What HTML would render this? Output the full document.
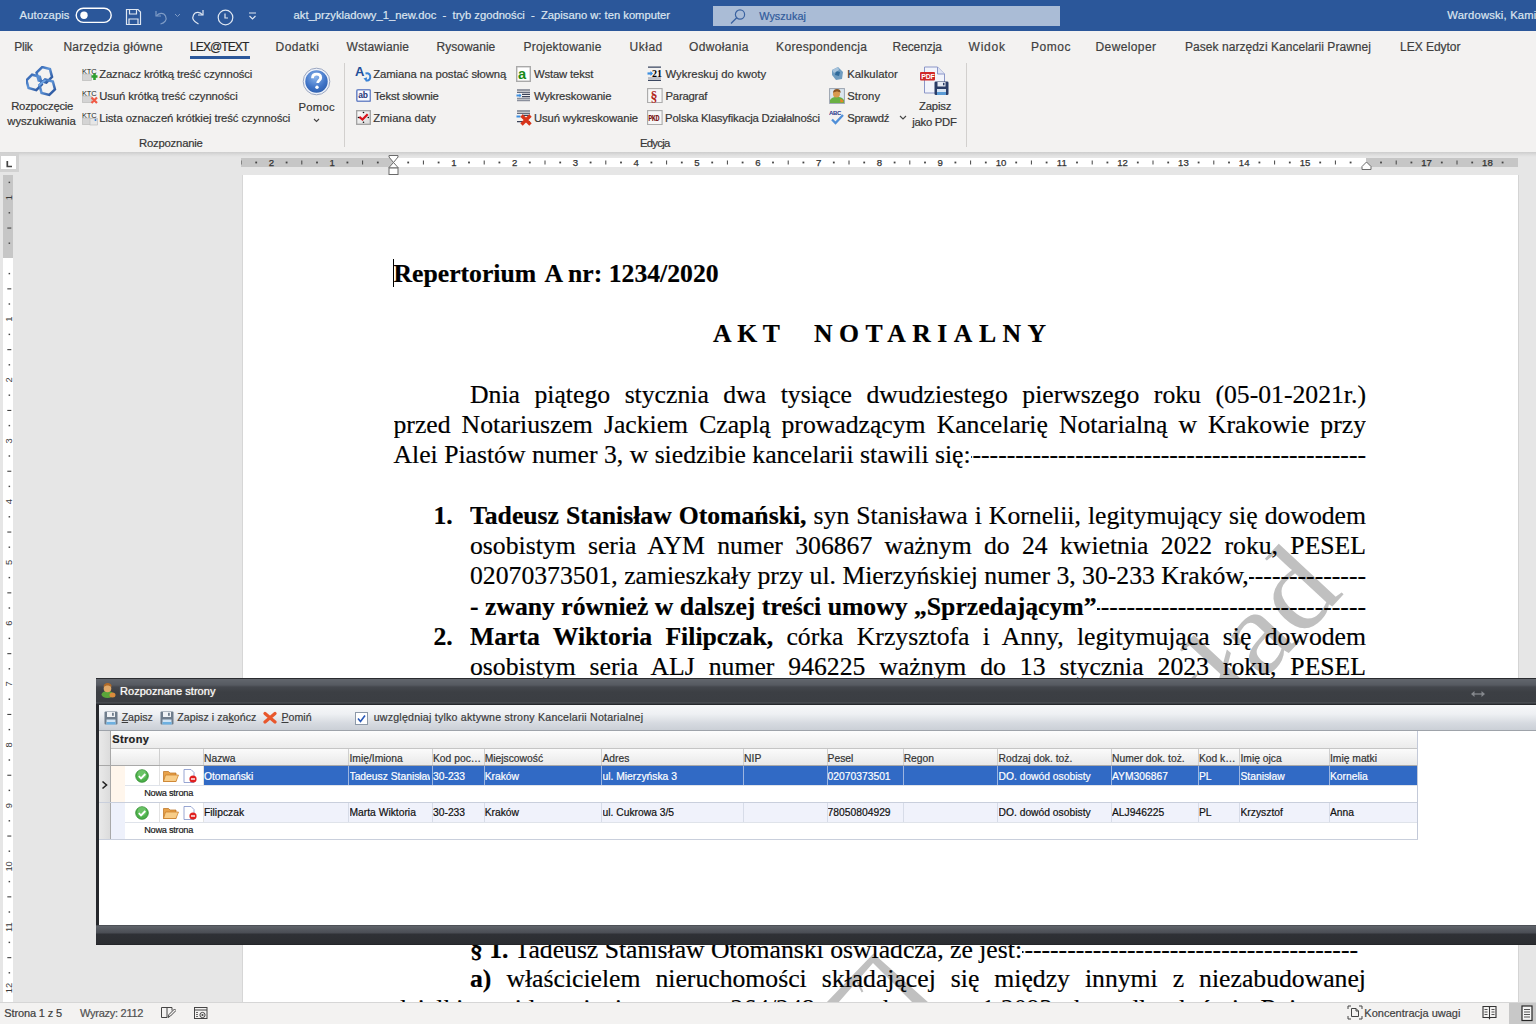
<!DOCTYPE html>
<html><head><meta charset="utf-8"><title>Word</title>
<style>
*{margin:0;padding:0;box-sizing:border-box}
html,body{width:1536px;height:1024px;overflow:hidden}
body{position:relative;background:#e6e6e6;font-family:"Liberation Sans",sans-serif;color:#333}
.a{position:absolute;white-space:nowrap}
#title{position:absolute;left:0;top:0;width:1536px;height:31px;background:#2b579a;color:#e3e9f2;font-size:11.2px}
#tabs{position:absolute;left:0;top:31px;width:1536px;height:121px;background:#f3f2f1}
.tab{position:absolute;top:40px;font-size:12.3px;color:#3c3c3c;line-height:14px}
.rb{position:absolute}
.a{-webkit-text-stroke:0.2px currentColor}
.ic{position:absolute}
#canvas{position:absolute;left:0;top:152px;width:1536px;height:850px;background:#e6e6e6}
#page{position:absolute;left:243px;top:175px;width:1275px;height:827px;background:#fff}
.dl{position:absolute;font-family:"Liberation Serif",serif;font-size:25.7px;line-height:30px;color:#000;white-space:nowrap}
.j{text-align:justify;text-align-last:justify;white-space:normal;height:30px;overflow:hidden}
#status{position:absolute;left:0;top:1002px;width:1536px;height:22px;background:#f3f2f1;border-top:1px solid #d4d4d4;font-size:10.6px;color:#444}
</style></head><body>

<div class="a" style="left:0px;top:0px;width:1536px;height:32px;background:linear-gradient(#2b579a 31px,#8fa4c5 31px)"></div>
<div class="a " style="left:19.61px;top:9.10px;font:11.2px/13.44px 'Liberation Sans',sans-serif;color:#dde5f0;letter-spacing:0.075px;">Autozapis</div>
<svg class="a" style="left:75px;top:7px;" width="38" height="17" viewBox="0 0 38 17"><rect x="1.2" y="1.2" width="35" height="14.2" rx="7.1" fill="none" stroke="#fff" stroke-width="1.4"/><circle cx="9" cy="8.3" r="3.7" fill="#fff"/></svg>
<svg class="a" style="left:125px;top:8px;" width="17" height="18" viewBox="0 0 17 18"><path d="M1.5 1.5h11.5l2.5 2.5v12.5h-14z" fill="none" stroke="#dfe7f2" stroke-width="1.2"/><path d="M4.5 1.5v4.5h7v-4.5M4 16.5v-5.5h9v5.5" fill="none" stroke="#dfe7f2" stroke-width="1.2"/></svg>
<svg class="a" style="left:152px;top:9px;" width="30" height="16" viewBox="0 0 30 16"><path d="M4 2v5h5" fill="none" stroke="#7f9cc6" stroke-width="1.2"/><path d="M4.5 7c2-3 7-4 9 0s-1 7-5 8" fill="none" stroke="#7f9cc6" stroke-width="1.2"/><path d="M23 5l2.5 2.5 2.5-2.5" fill="none" stroke="#7f9cc6" stroke-width="1"/></svg>
<svg class="a" style="left:189px;top:8px;" width="18" height="18" viewBox="0 0 18 18"><path d="M14 2v5h-5" fill="none" stroke="#dfe7f2" stroke-width="1.2"/><path d="M13.5 7c-2-3-7-4-9 0s1 7 5 9" fill="none" stroke="#dfe7f2" stroke-width="1.2"/></svg>
<svg class="a" style="left:217px;top:9px;" width="17" height="17" viewBox="0 0 17 17"><circle cx="8.5" cy="8.5" r="7.3" fill="none" stroke="#dfe7f2" stroke-width="1.2"/><path d="M8 4.5v4.5h3" fill="none" stroke="#dfe7f2" stroke-width="1.2"/></svg>
<svg class="a" style="left:247px;top:11px;" width="11" height="10" viewBox="0 0 11 10"><path d="M2 2h7M2.5 5l3 3 3-3" fill="none" stroke="#dfe7f2" stroke-width="1.1"/></svg>
<div class="a " style="left:293.61px;top:9.00px;font:11.2px/13.44px 'Liberation Sans',sans-serif;color:#dde5f0;letter-spacing:0.011px;">akt_przykladowy_1_new.doc&nbsp;&nbsp;-&nbsp;&nbsp;tryb zgodności&nbsp;&nbsp;-&nbsp;&nbsp;Zapisano w: ten komputer</div>
<div class="a" style="left:713px;top:6px;width:347px;height:20px;background:#aabcd6"></div>
<svg class="a" style="left:729px;top:8px;" width="18" height="17" viewBox="0 0 18 17"><circle cx="11" cy="6.5" r="4.6" fill="none" stroke="#3a62a0" stroke-width="1.2"/><path d="M7.7 9.8L2 15.5" stroke="#3a62a0" stroke-width="1.3"/></svg>
<div class="a " style="left:759.22px;top:9.78px;font:10.8px/12.96px 'Liberation Sans',sans-serif;color:#2f5a9b;letter-spacing:0.078px;">Wyszukaj</div>
<div class="a " style="left:1447.31px;top:9.40px;font:11.2px/13.44px 'Liberation Sans',sans-serif;color:#dde5f0;letter-spacing:0.214px;">Wardowski, Kamil</div>
<div class="a" style="left:0px;top:31px;width:1536px;height:121px;background:#f3f2f1"></div>
<div class="a" style="left:0px;top:152px;width:1536px;height:5px;background:linear-gradient(#cdcdcd,#dedede 60%,#e6e6e6)"></div>
<div class="a " style="left:14.18px;top:40.24px;font:12.0px/14.40px 'Liberation Sans',sans-serif;color:#404040;letter-spacing:-0.232px;">Plik</div>
<div class="a " style="left:63.38px;top:40.24px;font:12.0px/14.40px 'Liberation Sans',sans-serif;color:#404040;letter-spacing:0.257px;">Narzędzia główne</div>
<div class="a " style="left:190.08px;top:40.24px;font:12.0px/14.40px 'Liberation Sans',sans-serif;color:#262626;letter-spacing:-0.913px;">LEX@TEXT</div>
<div class="a " style="left:275.58px;top:40.24px;font:12.0px/14.40px 'Liberation Sans',sans-serif;color:#404040;letter-spacing:0.425px;">Dodatki</div>
<div class="a " style="left:346.58px;top:40.24px;font:12.0px/14.40px 'Liberation Sans',sans-serif;color:#404040;letter-spacing:0.110px;">Wstawianie</div>
<div class="a " style="left:436.58px;top:40.24px;font:12.0px/14.40px 'Liberation Sans',sans-serif;color:#404040;letter-spacing:-0.007px;">Rysowanie</div>
<div class="a " style="left:523.58px;top:40.24px;font:12.0px/14.40px 'Liberation Sans',sans-serif;color:#404040;letter-spacing:0.205px;">Projektowanie</div>
<div class="a " style="left:629.58px;top:40.24px;font:12.0px/14.40px 'Liberation Sans',sans-serif;color:#404040;letter-spacing:0.490px;">Układ</div>
<div class="a " style="left:689.08px;top:40.24px;font:12.0px/14.40px 'Liberation Sans',sans-serif;color:#404040;letter-spacing:0.330px;">Odwołania</div>
<div class="a " style="left:776.08px;top:40.24px;font:12.0px/14.40px 'Liberation Sans',sans-serif;color:#404040;letter-spacing:0.316px;">Korespondencja</div>
<div class="a " style="left:892.58px;top:40.24px;font:12.0px/14.40px 'Liberation Sans',sans-serif;color:#404040;letter-spacing:-0.098px;">Recenzja</div>
<div class="a " style="left:968.58px;top:40.24px;font:12.0px/14.40px 'Liberation Sans',sans-serif;color:#404040;letter-spacing:0.750px;">Widok</div>
<div class="a " style="left:1031.08px;top:40.24px;font:12.0px/14.40px 'Liberation Sans',sans-serif;color:#404040;letter-spacing:0.498px;">Pomoc</div>
<div class="a " style="left:1095.58px;top:40.24px;font:12.0px/14.40px 'Liberation Sans',sans-serif;color:#404040;letter-spacing:0.372px;">Deweloper</div>
<div class="a " style="left:1185.08px;top:40.24px;font:12.0px/14.40px 'Liberation Sans',sans-serif;color:#404040;letter-spacing:0.034px;">Pasek narzędzi Kancelarii Prawnej</div>
<div class="a " style="left:1400.08px;top:40.24px;font:12.0px/14.40px 'Liberation Sans',sans-serif;color:#404040;letter-spacing:-0.040px;">LEX Edytor</div>
<div class="a" style="left:190px;top:56px;width:60px;height:2.5px;background:#2b579a"></div>
<div class="a " style="left:11.20px;top:100.30px;font:11.3px/13.56px 'Liberation Sans',sans-serif;color:#363636;letter-spacing:-0.250px;">Rozpoczęcie</div>
<div class="a " style="left:7.30px;top:115.30px;font:11.3px/13.56px 'Liberation Sans',sans-serif;color:#363636;letter-spacing:-0.063px;">wyszukiwania</div>
<div class="a " style="left:99.20px;top:68.30px;font:11.3px/13.56px 'Liberation Sans',sans-serif;color:#363636;letter-spacing:-0.131px;">Zaznacz krótką treść czynności</div>
<div class="a " style="left:99.20px;top:90.00px;font:11.3px/13.56px 'Liberation Sans',sans-serif;color:#363636;letter-spacing:-0.084px;">Usuń krótką treść czynności</div>
<div class="a " style="left:99.20px;top:111.80px;font:11.3px/13.56px 'Liberation Sans',sans-serif;color:#363636;letter-spacing:-0.092px;">Lista oznaczeń krótkiej treść czynności</div>
<div class="a " style="left:298.40px;top:100.60px;font:11.3px/13.56px 'Liberation Sans',sans-serif;color:#363636;letter-spacing:0.255px;">Pomoc</div>
<div class="a " style="left:139.00px;top:136.70px;font:11.3px/13.56px 'Liberation Sans',sans-serif;color:#363636;letter-spacing:-0.207px;">Rozpoznanie</div>
<div class="a " style="left:373.20px;top:68.30px;font:11.3px/13.56px 'Liberation Sans',sans-serif;color:#363636;letter-spacing:-0.053px;">Zamiana na postać słowną</div>
<div class="a " style="left:373.90px;top:90.00px;font:11.3px/13.56px 'Liberation Sans',sans-serif;color:#363636;letter-spacing:-0.184px;">Tekst słownie</div>
<div class="a " style="left:373.20px;top:111.80px;font:11.3px/13.56px 'Liberation Sans',sans-serif;color:#363636;letter-spacing:0.061px;">Zmiana daty</div>
<div class="a " style="left:533.90px;top:68.30px;font:11.3px/13.56px 'Liberation Sans',sans-serif;color:#363636;letter-spacing:-0.141px;">Wstaw tekst</div>
<div class="a " style="left:533.90px;top:90.00px;font:11.3px/13.56px 'Liberation Sans',sans-serif;color:#363636;letter-spacing:-0.119px;">Wykreskowanie</div>
<div class="a " style="left:533.90px;top:111.80px;font:11.3px/13.56px 'Liberation Sans',sans-serif;color:#363636;letter-spacing:-0.114px;">Usuń wykreskowanie</div>
<div class="a " style="left:665.50px;top:68.30px;font:11.3px/13.56px 'Liberation Sans',sans-serif;color:#363636;letter-spacing:0.050px;">Wykreskuj do kwoty</div>
<div class="a " style="left:665.50px;top:90.00px;font:11.3px/13.56px 'Liberation Sans',sans-serif;color:#363636;letter-spacing:-0.207px;">Paragraf</div>
<div class="a " style="left:665.10px;top:111.80px;font:11.3px/13.56px 'Liberation Sans',sans-serif;color:#363636;letter-spacing:-0.166px;">Polska Klasyfikacja Działalności</div>
<div class="a " style="left:847.20px;top:68.30px;font:11.3px/13.56px 'Liberation Sans',sans-serif;color:#363636;letter-spacing:0.038px;">Kalkulator</div>
<div class="a " style="left:847.20px;top:90.00px;font:11.3px/13.56px 'Liberation Sans',sans-serif;color:#363636;letter-spacing:0.046px;">Strony</div>
<div class="a " style="left:847.20px;top:111.80px;font:11.3px/13.56px 'Liberation Sans',sans-serif;color:#363636;letter-spacing:-0.296px;">Sprawdź</div>
<div class="a " style="left:918.90px;top:100.30px;font:11.3px/13.56px 'Liberation Sans',sans-serif;color:#363636;letter-spacing:-0.158px;">Zapisz</div>
<div class="a " style="left:912.30px;top:115.70px;font:11.3px/13.56px 'Liberation Sans',sans-serif;color:#363636;letter-spacing:-0.268px;">jako PDF</div>
<div class="a " style="left:640.00px;top:136.50px;font:11.3px/13.56px 'Liberation Sans',sans-serif;color:#363636;letter-spacing:-0.745px;">Edycja</div>
<div class="a" style="left:344px;top:63px;width:1px;height:84px;background:#d2d0ce"></div>
<div class="a" style="left:966px;top:63px;width:1px;height:84px;background:#d2d0ce"></div>
<svg class="a" style="left:26px;top:66px;" width="31" height="31" viewBox="0 0 31 31"><defs><linearGradient id="hb" x1="0" y1="0" x2="1" y2="1"><stop offset="0" stop-color="#2a5aa8"/><stop offset=".45" stop-color="#5d93d6"/><stop offset="1" stop-color="#1d4690"/></linearGradient></defs><path d="M26.03,10.87 L20.37,16.53 L12.64,14.46 L10.57,6.73 L16.23,1.07 L23.96,3.14Z" fill="none" stroke="url(#hb)" stroke-width="2.5"/><path d="M15.93,18.47 L10.27,24.13 L2.54,22.06 L0.47,14.33 L6.13,8.67 L13.86,10.74Z" fill="none" stroke="url(#hb)" stroke-width="2.5"/><path d="M28.93,23.27 L23.27,28.93 L15.54,26.86 L13.47,19.13 L19.13,13.47 L26.86,15.54Z" fill="none" stroke="url(#hb)" stroke-width="2.5"/><path d="M12.5 19.5l7-5.5" stroke="#6ea2e0" stroke-width="2"/></svg>
<svg class="a" style="left:82px;top:67px;" width="17" height="15" viewBox="0 0 17 15"><text x="0" y="6.5" font-family="Liberation Sans" font-size="7.5" fill="#222" letter-spacing="-0.2">KTC</text><rect x="0.5" y="7" width="9" height="6.5" fill="#d4d4d4" stroke="#b5b5b5" stroke-width=".6"/><path d="M9.5 9.5h6M12.5 6.5v6.5" stroke="#2ea02e" stroke-width="2.6"/></svg>
<svg class="a" style="left:82px;top:89px;" width="17" height="15" viewBox="0 0 17 15"><text x="0" y="6.5" font-family="Liberation Sans" font-size="7.5" fill="#222" letter-spacing="-0.2">KTC</text><rect x="0.5" y="7" width="9" height="6.5" fill="#d4d4d4" stroke="#b5b5b5" stroke-width=".6"/><path d="M9.5 8.5l5.5 5.5M15 8.5l-5.5 5.5" stroke="#f05a45" stroke-width="2.2"/></svg>
<svg class="a" style="left:82px;top:111px;" width="17" height="15" viewBox="0 0 17 15"><text x="0" y="6.5" font-family="Liberation Sans" font-size="7.5" fill="#222" letter-spacing="-0.2">KTC</text><rect x="0.5" y="7" width="9" height="6.5" fill="#d4d4d4" stroke="#b5b5b5" stroke-width=".6"/><rect x="8" y="7.5" width="7.5" height="6.5" fill="#e6e6e6" stroke="#b5b5b5" stroke-width=".6"/><circle cx="13.5" cy="9" r="1" fill="#3a7ed0"/></svg>
<svg class="a" style="left:302px;top:67px;" width="29" height="29" viewBox="0 0 29 29"><defs><radialGradient id="pg" cx=".45" cy=".3" r=".8"><stop offset="0" stop-color="#8ab4ec"/><stop offset=".6" stop-color="#3f73c6"/><stop offset="1" stop-color="#2a5aa8"/></radialGradient></defs><circle cx="14.5" cy="14.5" r="13.3" fill="#eef2fa" stroke="#9aa6c0" stroke-width="1"/><circle cx="14.5" cy="14.5" r="11.2" fill="url(#pg)"/><path d="M10.5 11.2c0-2.6 1.9-4 4.2-4s4 1.4 4 3.5c0 2.6-3 3-3 5.3" fill="none" stroke="#fff" stroke-width="2.8"/><circle cx="15" cy="20.3" r="1.7" fill="#fff"/></svg>
<svg class="a" style="left:313px;top:118px;" width="7" height="5" viewBox="0 0 7 5"><path d="M1 1l2.5 2.5 2.5-2.5" fill="none" stroke="#444" stroke-width="1.1"/></svg>
<svg class="a" style="left:355px;top:65px;" width="17" height="18" viewBox="0 0 17 18"><text x="0" y="11" font-family="Liberation Sans" font-weight="bold" font-size="13" fill="#1f4e99">A</text><path d="M10.5 8.5c3.5-1 5.2 1.5 4.7 4.2s-2.7 3.2-4.5 2.7" fill="none" stroke="#3a83d6" stroke-width="2"/><path d="M8.5 13.5l3 3 .6-4.2z" fill="#3a83d6"/></svg>
<svg class="a" style="left:356px;top:89px;" width="15" height="13" viewBox="0 0 15 13"><rect x="0.8" y="0.8" width="13.6" height="11.5" rx="1.2" fill="#fafbff" stroke="#7189c8" stroke-width="1.6"/><text x="2.3" y="9.3" font-family="Liberation Sans" font-weight="bold" font-size="8.5" fill="#1f3478" letter-spacing="-0.3">ab</text></svg>
<svg class="a" style="left:356px;top:110px;" width="15" height="15" viewBox="0 0 15 15"><defs><linearGradient id="dg" x1="0" y1="0" x2="1" y2="1"><stop offset="0" stop-color="#fff"/><stop offset="1" stop-color="#d8d8d8"/></linearGradient></defs><rect x="0.7" y="0.7" width="13.6" height="13.6" fill="url(#dg)" stroke="#a0a0a0" stroke-width="1.3"/><path d="M3.3 6.8l3.2 2.8 5.2-5.3" fill="none" stroke="#d8121b" stroke-width="2.2"/><circle cx="7.5" cy="2.5" r=".8" fill="#111"/><circle cx="2.5" cy="7.5" r=".8" fill="#111"/><circle cx="12.3" cy="7.5" r=".8" fill="#111"/><circle cx="7.5" cy="12.2" r=".8" fill="#111"/></svg>
<svg class="a" style="left:516px;top:66px;" width="15" height="16" viewBox="0 0 15 16"><rect x="0.7" y="0.7" width="13.6" height="14.6" fill="#fff" stroke="#a9a9a9" stroke-width="1.4"/><text x="2" y="12.8" font-family="Liberation Sans" font-weight="bold" font-size="14" fill="#188a18" transform="scale(1.05 1)">a</text></svg>
<svg class="a" style="left:516px;top:89px;" width="15" height="13" viewBox="0 0 15 13"><path d="M1 1h13M1 3.2h13M6 5.4h8M6 7.6h8" stroke="#3a4258" stroke-width="1.1"/><path d="M1 9.6h13M1 11.6h13" stroke="#8a8f9c" stroke-width="1.5"/><path d="M0.5 6.5h4" stroke="#3b8ee0" stroke-width="2"/><path d="M3.5 4.5l2 2-2 2z" fill="#3b8ee0"/></svg>
<svg class="a" style="left:516px;top:110px;" width="16" height="16" viewBox="0 0 16 16"><path d="M1 1h13M1 3.2h13M6 5.4h8M1 11.6h13" stroke="#3a4258" stroke-width="1.1"/><path d="M0.5 6.5h4" stroke="#3b8ee0" stroke-width="2"/><path d="M5.5 5.5l9 9M14.5 5.5l-9 9" stroke="#d8341a" stroke-width="3.4"/></svg>
<svg class="a" style="left:647px;top:66px;" width="16" height="16" viewBox="0 0 16 16"><path d="M1 1.2h13M1 14.3h13" stroke="#3a4660" stroke-width="1.2"/><path d="M1 12h13" stroke="#8a8f9c" stroke-width="1"/><text x="5" y="11" font-family="Liberation Serif" font-weight="bold" font-size="10" fill="#000">21</text><path d="M0.5 7.5h4" stroke="#3b8ee0" stroke-width="2.2"/><path d="M3.5 5l2.5 2.5-2.5 2.5z" fill="#3b8ee0"/></svg>
<svg class="a" style="left:647px;top:88px;" width="16" height="15" viewBox="0 0 16 15"><rect x="0.6" y="0.6" width="14.5" height="14" fill="#f7f7f7" stroke="#a9a9a9" stroke-width="1.1"/><text x="3.6" y="12.8" font-family="Liberation Serif" font-weight="bold" font-size="14" fill="#b3281e">§</text></svg>
<svg class="a" style="left:647px;top:110px;" width="16" height="15" viewBox="0 0 16 15"><rect x="0.6" y="0.6" width="14.5" height="14" fill="#f7f7f7" stroke="#a9a9a9" stroke-width="1.1"/><text x="1.6" y="11.3" font-family="Liberation Mono" font-weight="bold" font-size="9.5" fill="#7a1410" transform="scale(0.72 1)" letter-spacing="-0.6">PKD</text></svg>
<svg class="a" style="left:830px;top:66px;" width="14" height="15" viewBox="0 0 14 15"><path d="M2 4l6-3 5 5-1 7-6 1-4-5z" fill="#6f9cc0"/><path d="M6 5l4 1-1 4-4-1z" fill="#2f6a9a"/><path d="M2 4l6-3 1 3-5 3z" fill="#a8c4dc"/></svg>
<svg class="a" style="left:829px;top:88px;" width="16" height="16" viewBox="0 0 16 16"><rect x="0.6" y="0.6" width="14.8" height="14.8" fill="#dbe6ef" stroke="#9aa2ae" stroke-width="1"/><path d="M1 15v-3c1.5-2.5 4-3 7-3s5.5.5 7 3v3z" fill="#6ab043"/><circle cx="7.5" cy="6" r="3.5" fill="#d99a4e"/><path d="M4 5c0-2.5 1.5-4 4-4s4 1.5 3.5 4c-1-1-2.5-1.5-3.5-1.5S5 4 4 5z" fill="#8a5420"/><path d="M11 11c2 0 3 1 3.5 3l-3 .5z" fill="#e8842a"/></svg>
<svg class="a" style="left:829px;top:109px;" width="17" height="16" viewBox="0 0 17 16"><text x="0" y="6" font-family="Liberation Sans" font-weight="bold" font-size="6" fill="#24348a" letter-spacing="-0.3">ABC</text><path d="M3 10.5l3.5 3.5 7.5-8" fill="none" stroke="#4f8fd8" stroke-width="2.3"/></svg>
<svg class="a" style="left:899px;top:115px;" width="8" height="6" viewBox="0 0 8 6"><path d="M1 1l3 3 3-3" fill="none" stroke="#444" stroke-width="1.1"/></svg>
<svg class="a" style="left:919px;top:66px;" width="31" height="30" viewBox="0 0 31 30"><path d="M5.5 1h13l7 7v19h-20z" fill="#f2f4fb" stroke="#8b96c8" stroke-width="1"/><path d="M18.5 1v7h7" fill="#dfe3f3" stroke="#8b96c8" stroke-width="1"/><rect x="1" y="6" width="15" height="8.5" rx="1" fill="#d02828"/><text x="2.3" y="13" font-family="Liberation Sans" font-weight="bold" font-size="7" fill="#fff" letter-spacing="-0.2">PDF</text><rect x="15.5" y="15.5" width="14" height="13.5" rx="1.3" fill="#2a3c66"/><rect x="18.5" y="16" width="8" height="4.5" fill="#e8ecf4"/><rect x="24" y="16.8" width="1.5" height="2.5" fill="#2a3c66"/><rect x="18" y="23" width="9" height="6" fill="#d8e4f2"/><rect x="18" y="26" width="9" height="3" fill="#5b9bd5"/></svg>
<div class="a" style="left:243px;top:175px;width:1275px;height:827px;background:#fff"></div>
<div class="a" style="left:1518px;top:175px;width:1px;height:827px;background:#d4d4d4"></div>
<div class="a" style="left:242px;top:175px;width:1px;height:827px;background:#d6d6d6"></div>
<div class="a" style="left:0px;top:153px;width:19px;height:19px;background:#d2d2d2"></div>
<div class="a" style="left:1px;top:156px;width:15px;height:13px;background:#ffffff"></div>
<svg class="a" style="left:1px;top:156px;" width="15" height="13" viewBox="0 0 15 13"><path d="M6.3 5v5.5h4.7" fill="none" stroke="#444" stroke-width="1.7"/></svg>
<div class="a" style="left:241px;top:158px;width:1277px;height:9px;background:#c6c6c6"></div>
<div class="a" style="left:393px;top:158px;width:973px;height:9px;background:#fff"></div>
<svg class="a" style="left:241px;top:158px;" width="1277" height="9" viewBox="0 0 1277 9"><rect x="-0.5" y="2.5" width="1" height="4" fill="#444"/><rect x="14.3" y="3.6" width="1.8" height="1.8" fill="#444"/><text x="30.4" y="8" text-anchor="middle" font-size="9.6" fill="#333" font-family="Liberation Sans" stroke="#333" stroke-width="0.25">2</text><rect x="44.7" y="3.6" width="1.8" height="1.8" fill="#444"/><rect x="60.3" y="2.5" width="1" height="4" fill="#444"/><rect x="75.1" y="3.6" width="1.8" height="1.8" fill="#444"/><text x="91.2" y="8" text-anchor="middle" font-size="9.6" fill="#333" font-family="Liberation Sans" stroke="#333" stroke-width="0.25">1</text><rect x="105.5" y="3.6" width="1.8" height="1.8" fill="#444"/><rect x="121.1" y="2.5" width="1" height="4" fill="#444"/><rect x="135.9" y="3.6" width="1.8" height="1.8" fill="#444"/><rect x="166.3" y="3.6" width="1.8" height="1.8" fill="#444"/><rect x="181.9" y="2.5" width="1" height="4" fill="#444"/><rect x="196.7" y="3.6" width="1.8" height="1.8" fill="#444"/><text x="212.8" y="8" text-anchor="middle" font-size="9.6" fill="#333" font-family="Liberation Sans" stroke="#333" stroke-width="0.25">1</text><rect x="227.1" y="3.6" width="1.8" height="1.8" fill="#444"/><rect x="242.7" y="2.5" width="1" height="4" fill="#444"/><rect x="257.5" y="3.6" width="1.8" height="1.8" fill="#444"/><text x="273.6" y="8" text-anchor="middle" font-size="9.6" fill="#333" font-family="Liberation Sans" stroke="#333" stroke-width="0.25">2</text><rect x="287.9" y="3.6" width="1.8" height="1.8" fill="#444"/><rect x="303.5" y="2.5" width="1" height="4" fill="#444"/><rect x="318.3" y="3.6" width="1.8" height="1.8" fill="#444"/><text x="334.4" y="8" text-anchor="middle" font-size="9.6" fill="#333" font-family="Liberation Sans" stroke="#333" stroke-width="0.25">3</text><rect x="348.7" y="3.6" width="1.8" height="1.8" fill="#444"/><rect x="364.3" y="2.5" width="1" height="4" fill="#444"/><rect x="379.1" y="3.6" width="1.8" height="1.8" fill="#444"/><text x="395.2" y="8" text-anchor="middle" font-size="9.6" fill="#333" font-family="Liberation Sans" stroke="#333" stroke-width="0.25">4</text><rect x="409.5" y="3.6" width="1.8" height="1.8" fill="#444"/><rect x="425.1" y="2.5" width="1" height="4" fill="#444"/><rect x="439.9" y="3.6" width="1.8" height="1.8" fill="#444"/><text x="456.0" y="8" text-anchor="middle" font-size="9.6" fill="#333" font-family="Liberation Sans" stroke="#333" stroke-width="0.25">5</text><rect x="470.3" y="3.6" width="1.8" height="1.8" fill="#444"/><rect x="485.9" y="2.5" width="1" height="4" fill="#444"/><rect x="500.7" y="3.6" width="1.8" height="1.8" fill="#444"/><text x="516.8" y="8" text-anchor="middle" font-size="9.6" fill="#333" font-family="Liberation Sans" stroke="#333" stroke-width="0.25">6</text><rect x="531.1" y="3.6" width="1.8" height="1.8" fill="#444"/><rect x="546.7" y="2.5" width="1" height="4" fill="#444"/><rect x="561.5" y="3.6" width="1.8" height="1.8" fill="#444"/><text x="577.6" y="8" text-anchor="middle" font-size="9.6" fill="#333" font-family="Liberation Sans" stroke="#333" stroke-width="0.25">7</text><rect x="591.9" y="3.6" width="1.8" height="1.8" fill="#444"/><rect x="607.5" y="2.5" width="1" height="4" fill="#444"/><rect x="622.3" y="3.6" width="1.8" height="1.8" fill="#444"/><text x="638.4" y="8" text-anchor="middle" font-size="9.6" fill="#333" font-family="Liberation Sans" stroke="#333" stroke-width="0.25">8</text><rect x="652.7" y="3.6" width="1.8" height="1.8" fill="#444"/><rect x="668.3" y="2.5" width="1" height="4" fill="#444"/><rect x="683.1" y="3.6" width="1.8" height="1.8" fill="#444"/><text x="699.2" y="8" text-anchor="middle" font-size="9.6" fill="#333" font-family="Liberation Sans" stroke="#333" stroke-width="0.25">9</text><rect x="713.5" y="3.6" width="1.8" height="1.8" fill="#444"/><rect x="729.1" y="2.5" width="1" height="4" fill="#444"/><rect x="743.9" y="3.6" width="1.8" height="1.8" fill="#444"/><text x="760.0" y="8" text-anchor="middle" font-size="9.6" fill="#333" font-family="Liberation Sans" stroke="#333" stroke-width="0.25">10</text><rect x="774.3" y="3.6" width="1.8" height="1.8" fill="#444"/><rect x="789.9" y="2.5" width="1" height="4" fill="#444"/><rect x="804.7" y="3.6" width="1.8" height="1.8" fill="#444"/><text x="820.8" y="8" text-anchor="middle" font-size="9.6" fill="#333" font-family="Liberation Sans" stroke="#333" stroke-width="0.25">11</text><rect x="835.1" y="3.6" width="1.8" height="1.8" fill="#444"/><rect x="850.7" y="2.5" width="1" height="4" fill="#444"/><rect x="865.5" y="3.6" width="1.8" height="1.8" fill="#444"/><text x="881.6" y="8" text-anchor="middle" font-size="9.6" fill="#333" font-family="Liberation Sans" stroke="#333" stroke-width="0.25">12</text><rect x="895.9" y="3.6" width="1.8" height="1.8" fill="#444"/><rect x="911.5" y="2.5" width="1" height="4" fill="#444"/><rect x="926.3" y="3.6" width="1.8" height="1.8" fill="#444"/><text x="942.4" y="8" text-anchor="middle" font-size="9.6" fill="#333" font-family="Liberation Sans" stroke="#333" stroke-width="0.25">13</text><rect x="956.7" y="3.6" width="1.8" height="1.8" fill="#444"/><rect x="972.3" y="2.5" width="1" height="4" fill="#444"/><rect x="987.1" y="3.6" width="1.8" height="1.8" fill="#444"/><text x="1003.2" y="8" text-anchor="middle" font-size="9.6" fill="#333" font-family="Liberation Sans" stroke="#333" stroke-width="0.25">14</text><rect x="1017.5" y="3.6" width="1.8" height="1.8" fill="#444"/><rect x="1033.1" y="2.5" width="1" height="4" fill="#444"/><rect x="1047.9" y="3.6" width="1.8" height="1.8" fill="#444"/><text x="1064.0" y="8" text-anchor="middle" font-size="9.6" fill="#333" font-family="Liberation Sans" stroke="#333" stroke-width="0.25">15</text><rect x="1078.3" y="3.6" width="1.8" height="1.8" fill="#444"/><rect x="1093.9" y="2.5" width="1" height="4" fill="#444"/><rect x="1108.7" y="3.6" width="1.8" height="1.8" fill="#444"/><rect x="1139.1" y="3.6" width="1.8" height="1.8" fill="#444"/><rect x="1154.7" y="2.5" width="1" height="4" fill="#444"/><rect x="1169.5" y="3.6" width="1.8" height="1.8" fill="#444"/><text x="1185.6" y="8" text-anchor="middle" font-size="9.6" fill="#333" font-family="Liberation Sans" stroke="#333" stroke-width="0.25">17</text><rect x="1199.9" y="3.6" width="1.8" height="1.8" fill="#444"/><rect x="1215.5" y="2.5" width="1" height="4" fill="#444"/><rect x="1230.3" y="3.6" width="1.8" height="1.8" fill="#444"/><text x="1246.4" y="8" text-anchor="middle" font-size="9.6" fill="#333" font-family="Liberation Sans" stroke="#333" stroke-width="0.25">18</text><rect x="1260.7" y="3.6" width="1.8" height="1.8" fill="#444"/></svg>
<svg class="a" style="left:387px;top:154px;" width="13" height="22" viewBox="0 0 13 22"><path d="M2 1.5h9v1.5l-4.5 5.5-4.5-5.5z M6.5 8.5l4.5 5v0.5h-9v-0.5z" fill="#fff" stroke="#6b6b6b" stroke-width="1"/><rect x="2" y="14" width="9" height="6.5" fill="#fff" stroke="#6b6b6b" stroke-width="1"/></svg>
<svg class="a" style="left:1360px;top:161px;" width="13" height="10" viewBox="0 0 13 10"><path d="M6.5 1l4.5 4.5v3h-9v-3z" fill="#fff" stroke="#6b6b6b" stroke-width="1"/></svg>
<div class="a" style="left:3px;top:175px;width:10px;height:827px;background:#fff"></div>
<div class="a" style="left:3px;top:175px;width:10px;height:83.4px;background:#c6c6c6"></div>
<svg class="a" style="left:3px;top:175px;" width="10" height="827" viewBox="0 0 10 827"><rect x="5.6" y="6.7" width="1.5" height="1.4" fill="#444"/><text transform="translate(9.2 22.6) rotate(-90)" x="0" y="0" text-anchor="middle" font-size="9.3" fill="#3a3a3a" font-family="Liberation Sans">1</text><rect x="5.6" y="37.1" width="1.5" height="1.4" fill="#444"/><rect x="4.3" y="52.5" width="4" height="1.1" fill="#444"/><rect x="5.6" y="67.5" width="1.5" height="1.4" fill="#444"/><rect x="5.6" y="97.9" width="1.5" height="1.4" fill="#444"/><rect x="4.3" y="113.3" width="4" height="1.1" fill="#444"/><rect x="5.6" y="128.3" width="1.5" height="1.4" fill="#444"/><text transform="translate(9.2 144.2) rotate(-90)" x="0" y="0" text-anchor="middle" font-size="9.3" fill="#3a3a3a" font-family="Liberation Sans">1</text><rect x="5.6" y="158.7" width="1.5" height="1.4" fill="#444"/><rect x="4.3" y="174.1" width="4" height="1.1" fill="#444"/><rect x="5.6" y="189.1" width="1.5" height="1.4" fill="#444"/><text transform="translate(9.2 205.0) rotate(-90)" x="0" y="0" text-anchor="middle" font-size="9.3" fill="#3a3a3a" font-family="Liberation Sans">2</text><rect x="5.6" y="219.5" width="1.5" height="1.4" fill="#444"/><rect x="4.3" y="234.9" width="4" height="1.1" fill="#444"/><rect x="5.6" y="249.9" width="1.5" height="1.4" fill="#444"/><text transform="translate(9.2 265.8) rotate(-90)" x="0" y="0" text-anchor="middle" font-size="9.3" fill="#3a3a3a" font-family="Liberation Sans">3</text><rect x="5.6" y="280.3" width="1.5" height="1.4" fill="#444"/><rect x="4.3" y="295.7" width="4" height="1.1" fill="#444"/><rect x="5.6" y="310.7" width="1.5" height="1.4" fill="#444"/><text transform="translate(9.2 326.6) rotate(-90)" x="0" y="0" text-anchor="middle" font-size="9.3" fill="#3a3a3a" font-family="Liberation Sans">4</text><rect x="5.6" y="341.1" width="1.5" height="1.4" fill="#444"/><rect x="4.3" y="356.5" width="4" height="1.1" fill="#444"/><rect x="5.6" y="371.5" width="1.5" height="1.4" fill="#444"/><text transform="translate(9.2 387.4) rotate(-90)" x="0" y="0" text-anchor="middle" font-size="9.3" fill="#3a3a3a" font-family="Liberation Sans">5</text><rect x="5.6" y="401.9" width="1.5" height="1.4" fill="#444"/><rect x="4.3" y="417.3" width="4" height="1.1" fill="#444"/><rect x="5.6" y="432.3" width="1.5" height="1.4" fill="#444"/><text transform="translate(9.2 448.2) rotate(-90)" x="0" y="0" text-anchor="middle" font-size="9.3" fill="#3a3a3a" font-family="Liberation Sans">6</text><rect x="5.6" y="462.7" width="1.5" height="1.4" fill="#444"/><rect x="4.3" y="478.1" width="4" height="1.1" fill="#444"/><rect x="5.6" y="493.1" width="1.5" height="1.4" fill="#444"/><text transform="translate(9.2 509.0) rotate(-90)" x="0" y="0" text-anchor="middle" font-size="9.3" fill="#3a3a3a" font-family="Liberation Sans">7</text><rect x="5.6" y="523.5" width="1.5" height="1.4" fill="#444"/><rect x="4.3" y="538.9" width="4" height="1.1" fill="#444"/><rect x="5.6" y="553.9" width="1.5" height="1.4" fill="#444"/><text transform="translate(9.2 569.8) rotate(-90)" x="0" y="0" text-anchor="middle" font-size="9.3" fill="#3a3a3a" font-family="Liberation Sans">8</text><rect x="5.6" y="584.3" width="1.5" height="1.4" fill="#444"/><rect x="4.3" y="599.7" width="4" height="1.1" fill="#444"/><rect x="5.6" y="614.7" width="1.5" height="1.4" fill="#444"/><text transform="translate(9.2 630.6) rotate(-90)" x="0" y="0" text-anchor="middle" font-size="9.3" fill="#3a3a3a" font-family="Liberation Sans">9</text><rect x="5.6" y="645.1" width="1.5" height="1.4" fill="#444"/><rect x="4.3" y="660.5" width="4" height="1.1" fill="#444"/><rect x="5.6" y="675.5" width="1.5" height="1.4" fill="#444"/><text transform="translate(9.2 691.4) rotate(-90)" x="0" y="0" text-anchor="middle" font-size="9.3" fill="#3a3a3a" font-family="Liberation Sans">10</text><rect x="5.6" y="705.9" width="1.5" height="1.4" fill="#444"/><rect x="4.3" y="721.3" width="4" height="1.1" fill="#444"/><rect x="5.6" y="736.3" width="1.5" height="1.4" fill="#444"/><text transform="translate(9.2 752.2) rotate(-90)" x="0" y="0" text-anchor="middle" font-size="9.3" fill="#3a3a3a" font-family="Liberation Sans">11</text><rect x="5.6" y="766.7" width="1.5" height="1.4" fill="#444"/><rect x="4.3" y="782.1" width="4" height="1.1" fill="#444"/><rect x="5.6" y="797.1" width="1.5" height="1.4" fill="#444"/><text transform="translate(9.2 813.0) rotate(-90)" x="0" y="0" text-anchor="middle" font-size="9.3" fill="#3a3a3a" font-family="Liberation Sans">12</text></svg>
<svg class="a" style="left:0;top:0" width="1536" height="1024"><text transform="translate(1344.55 593.1) rotate(-47) scale(1.085 1)" text-anchor="end" font-family="Liberation Serif" font-size="118" fill="#c0c0c0">Przykład</text><path d="M873.5 953.5L826 1003h12l35-40 40 40h16z" fill="#c0c0c0"/><path d="M855 977l7.5 15" stroke="#c0c0c0" stroke-width="2"/></svg>
<div class="a" style="left:393px;top:259px;width:1px;height:28px;background:#000"></div>
<div class="a" style="left:393.5px;top:258.91px;font:25.7px/30.84px 'Liberation Serif',serif;color:#000;"><b>Repertorium<span style="margin-left:3.3px"> </span>A nr: 1234/2020</b></div>
<div class="a" style="left:713px;top:319.41px;font:25.7px/30.84px 'Liberation Serif',serif;color:#000;letter-spacing:5.6px"><b>AKT</b></div>
<div class="a" style="left:814px;top:319.41px;font:25.7px/30.84px 'Liberation Serif',serif;color:#000;letter-spacing:6.5px"><b>NOTARIALNY</b></div>
<div class="a" style="left:470px;top:379.91px;width:896px;height:30.8px;overflow:hidden;white-space:normal;text-align:justify;text-align-last:justify;font:25.7px/30.84px 'Liberation Serif',serif;color:#000">Dnia piątego stycznia dwa tysiące dwudziestego pierwszego roku (05-01-2021r.)</div>
<div class="a" style="left:393.5px;top:410.11px;width:972.5px;height:30.8px;overflow:hidden;white-space:normal;text-align:justify;text-align-last:justify;font:25.7px/30.84px 'Liberation Serif',serif;color:#000">przed Notariuszem Jackiem Czaplą prowadzącym Kancelarię Notarialną w Krakowie przy</div>
<div class="a" style="left:393.5px;top:440.41px;width:972.5px;height:30.8px;display:flex;font:25.7px/30.84px 'Liberation Serif',serif;color:#000"><span style="">Alei Piastów numer 3, w siedzibie kancelarii stawili się:</span><span style="flex:1;overflow:hidden;direction:rtl;text-align:left;font-weight:normal">------------------------------------------------------------------------------------------------------------------------------------------------------</span></div>
<div class="a" style="left:433.4px;top:500.91px;font:25.7px/30.84px 'Liberation Serif',serif;color:#000;"><b>1.</b></div>
<div class="a" style="left:470px;top:500.91px;width:896px;height:30.8px;overflow:hidden;white-space:normal;text-align:justify;text-align-last:justify;font:25.7px/30.84px 'Liberation Serif',serif;color:#000"><b>Tadeusz Stanisław Otomański,</b> syn Stanisława i Kornelii, legitymujący się dowodem</div>
<div class="a" style="left:470px;top:531.11px;width:896px;height:30.8px;overflow:hidden;white-space:normal;text-align:justify;text-align-last:justify;font:25.7px/30.84px 'Liberation Serif',serif;color:#000">osobistym seria AYM numer 306867 ważnym do 24 kwietnia 2022 roku, PESEL</div>
<div class="a" style="left:470px;top:561.41px;width:896px;height:30.8px;display:flex;font:25.7px/30.84px 'Liberation Serif',serif;color:#000"><span style="">02070373501, zamieszkały przy ul. Mierzyńskiej numer 3, 30-233 Kraków,</span><span style="flex:1;overflow:hidden;direction:rtl;text-align:left;font-weight:normal">------------------------------------------------------------------------------------------------------------------------------------------------------</span></div>
<div class="a" style="left:470px;top:591.61px;width:896px;height:30.8px;display:flex;font:25.7px/30.84px 'Liberation Serif',serif;color:#000"><span style="font-weight:bold;">- zwany również w dalszej treści umowy „Sprzedającym”</span><span style="flex:1;overflow:hidden;direction:rtl;text-align:left;font-weight:normal">------------------------------------------------------------------------------------------------------------------------------------------------------</span></div>
<div class="a" style="left:433.4px;top:621.91px;font:25.7px/30.84px 'Liberation Serif',serif;color:#000;"><b>2.</b></div>
<div class="a" style="left:470px;top:621.91px;width:896px;height:30.8px;overflow:hidden;white-space:normal;text-align:justify;text-align-last:justify;font:25.7px/30.84px 'Liberation Serif',serif;color:#000"><b>Marta Wiktoria Filipczak,</b> córka Krzysztofa i Anny, legitymująca się dowodem</div>
<div class="a" style="left:470px;top:652.11px;width:896px;height:30.8px;overflow:hidden;white-space:normal;text-align:justify;text-align-last:justify;font:25.7px/30.84px 'Liberation Serif',serif;color:#000">osobistym seria ALJ numer 946225 ważnym do 13 stycznia 2023 roku, PESEL</div>
<div class="a" style="left:470px;top:934.91px;width:888px;height:30.8px;display:flex;font:25.7px/30.84px 'Liberation Serif',serif;color:#000"><span style=""><b>§ 1.</b> Tadeusz Stanisław Otomański oświadcza, że jest:</span><span style="flex:1;overflow:hidden;direction:rtl;text-align:left;font-weight:normal">------------------------------------------------------------------------------------------------------------------------------------------------------</span></div>
<div class="a" style="left:470px;top:963.81px;width:896px;height:30.8px;overflow:hidden;white-space:normal;text-align:justify;text-align-last:justify;font:25.7px/30.84px 'Liberation Serif',serif;color:#000"><b>a)</b> właścicielem nieruchomości składającej się między innymi z niezabudowanej</div>
<div class="a" style="left:393.5px;top:994.11px;width:972.5px;height:30.8px;overflow:hidden;white-space:normal;text-align:justify;text-align-last:justify;font:25.7px/30.84px 'Liberation Serif',serif;color:#000">działki ewidencyjnej numer 264/248 o obszarze 1,2093 ha, dla której Rejonowy</div>
<div class="a" style="left:96px;top:678px;width:1440px;height:267px;background:#26282c"></div>
<div class="a" style="left:96px;top:678px;width:1440px;height:27px;background:linear-gradient(#2a2c30 0px,#2a2c30 1px,#62666d 1px,#565a61 7px,#44474d 9px,#3c3f44 14px,#3b3e43 24px,#53575d 25px,#26282c 26px)"></div>
<svg class="a" style="left:100px;top:682px;" width="17" height="17" viewBox="0 0 17 17"><ellipse cx="7.5" cy="12.5" rx="6" ry="3.5" fill="#5aa53a"/><circle cx="7.5" cy="6.5" r="3.8" fill="#e0a868"/><path d="M3.5 5c0-3 2-4 4-4s4.5 1 4 4c-1-1-3-1.5-4-1.5S4.5 4 3.5 5z" fill="#b06a28"/><ellipse cx="12.5" cy="13" rx="3" ry="2.5" fill="#d98c3c"/></svg>
<div class="a " style="left:120.02px;top:684.59px;font:11px/13.20px 'Liberation Sans',sans-serif;color:#ffffff;letter-spacing:0.037px;text-shadow:0 0 2px rgba(255,230,190,.35)">Rozpoznane strony</div>
<svg class="a" style="left:1470px;top:689px;" width="16" height="10" viewBox="0 0 16 10"><path d="M2 5h12" stroke="#85888d" stroke-width="1.3"/><path d="M1 5l3.5-3v6zM15 5l-3.5-3v6z" fill="#85888d"/></svg>
<div class="a" style="left:99px;top:705px;width:1437px;height:26px;background:linear-gradient(#f7f8fa 0%,#eef0f3 35%,#d6dae0 70%,#c9ced5 100%)"></div>
<div class="a" style="left:99px;top:730px;width:1437px;height:1px;background:#9ea3aa"></div>
<div class="a" style="left:99px;top:731px;width:1437px;height:194px;background:#ffffff"></div>
<div class="a" style="left:96px;top:925px;width:1440px;height:20px;background:linear-gradient(#3a3d43 0px,#5f636a 1px,#4a4d54 8px,#2f3136 9px,#2b2d31 19px,#1d1e21 20px)"></div>
<svg class="a" style="left:104px;top:711px;" width="14" height="14" viewBox="0 0 14 14"><rect x="0.5" y="0.5" width="13" height="13" rx="1" fill="#6f7d8c"/><rect x="3" y="1" width="8" height="5" fill="#f0f2f5"/><rect x="8" y="1.8" width="1.8" height="3" fill="#6f7d8c"/><rect x="2.5" y="8.5" width="9" height="5" fill="#cfe3f4"/><rect x="2.5" y="11" width="9" height="2.5" fill="#6db0e0"/></svg>
<svg class="a" style="left:160px;top:711px;" width="14" height="14" viewBox="0 0 14 14"><rect x="0.5" y="0.5" width="13" height="13" rx="1" fill="#6f7d8c"/><rect x="3" y="1" width="8" height="5" fill="#f0f2f5"/><rect x="8" y="1.8" width="1.8" height="3" fill="#6f7d8c"/><rect x="2.5" y="8.5" width="9" height="5" fill="#cfe3f4"/><rect x="2.5" y="11" width="9" height="2.5" fill="#6db0e0"/></svg>
<div class="a " style="left:121.63px;top:711.47px;font:10.6px/12.72px 'Liberation Sans',sans-serif;color:#3b3b3b;letter-spacing:0.004px;"><u>Z</u>apisz</div>
<div class="a " style="left:177.33px;top:711.47px;font:10.6px/12.72px 'Liberation Sans',sans-serif;color:#3b3b3b;letter-spacing:0.046px;">Zapisz i za<u>k</u>ończ</div>
<svg class="a" style="left:263px;top:711px;" width="14" height="13" viewBox="0 0 14 13"><path d="M2 2.5L12 11M12 2.5L2 11" stroke="#e8572c" stroke-width="3.2" stroke-linecap="round"/></svg>
<div class="a " style="left:281.43px;top:711.47px;font:10.6px/12.72px 'Liberation Sans',sans-serif;color:#3b3b3b;letter-spacing:0.024px;"><u>P</u>omiń</div>
<svg class="a" style="left:355px;top:711.5px;" width="13" height="13" viewBox="0 0 13 13"><rect x="0.5" y="0.5" width="12" height="12" fill="#fff" stroke="#8d99a8"/><path d="M3 6.5l2.5 3 4.5-6" fill="none" stroke="#2a59b8" stroke-width="1.6"/></svg>
<div class="a " style="left:373.63px;top:711.47px;font:10.6px/12.72px 'Liberation Sans',sans-serif;color:#3b3b3b;letter-spacing:0.234px;">uwzględniaj tylko aktywne strony Kancelarii Notarialnej</div>
<div class="a" style="left:99px;top:731px;width:1319px;height:109px;background:#fff;border:1px solid #c3c9d8;border-top:none"></div>
<div class="a" style="left:110px;top:731px;width:1307px;height:17px;background:linear-gradient(#fdfdfd,#ebebeb)"></div>
<div class="a" style="left:110px;top:748px;width:1307px;height:1px;background:#c5c5c5"></div>
<div class="a " style="left:112.21px;top:732.99px;font:11px/13.20px 'Liberation Sans',sans-serif;color:#222;font-weight:bold;letter-spacing:0.367px;">Strony</div>
<div class="a" style="left:99px;top:731px;width:11px;height:108px;background:linear-gradient(90deg,#e9e9e9,#dcdcdc)"></div>
<div class="a" style="left:110px;top:731px;width:1px;height:108px;background:#a8a8a8"></div>
<div class="a" style="left:99px;top:765px;width:11px;height:1px;background:#a8a8a8"></div>
<div class="a" style="left:99px;top:802px;width:11px;height:1px;background:#b8b8b8"></div>
<svg class="a" style="left:101px;top:780px;" width="8" height="10" viewBox="0 0 8 10"><path d="M1.5 1.5l4 3.5-4 3.5" fill="none" stroke="#222" stroke-width="1.6"/></svg>
<div class="a" style="left:111px;top:749px;width:1306px;height:16px;background:linear-gradient(#fbfbfb,#e9e9e9)"></div>
<div class="a" style="left:111px;top:765px;width:1306px;height:1px;background:#a9a9a9"></div>
<div class="a" style="left:159px;top:749px;width:1px;height:16px;background:#cfcfcf"></div>
<div class="a" style="left:203px;top:749px;width:1px;height:16px;background:#cfcfcf"></div>
<div class="a " style="left:204.00px;top:752.55px;font:10.3px/12.36px 'Liberation Sans',sans-serif;color:#333;">Nazwa</div>
<div class="a" style="left:348px;top:749px;width:1px;height:16px;background:#cfcfcf"></div>
<div class="a " style="left:349.50px;top:752.55px;font:10.3px/12.36px 'Liberation Sans',sans-serif;color:#333;">Imię/Imiona</div>
<div class="a" style="left:432px;top:749px;width:1px;height:16px;background:#cfcfcf"></div>
<div class="a " style="left:433.00px;top:752.55px;font:10.3px/12.36px 'Liberation Sans',sans-serif;color:#333;">Kod poc…</div>
<div class="a" style="left:484px;top:749px;width:1px;height:16px;background:#cfcfcf"></div>
<div class="a " style="left:484.70px;top:752.55px;font:10.3px/12.36px 'Liberation Sans',sans-serif;color:#333;">Miejscowość</div>
<div class="a" style="left:601px;top:749px;width:1px;height:16px;background:#cfcfcf"></div>
<div class="a " style="left:602.50px;top:752.55px;font:10.3px/12.36px 'Liberation Sans',sans-serif;color:#333;">Adres</div>
<div class="a" style="left:743px;top:749px;width:1px;height:16px;background:#cfcfcf"></div>
<div class="a " style="left:744.10px;top:752.55px;font:10.3px/12.36px 'Liberation Sans',sans-serif;color:#333;">NIP</div>
<div class="a" style="left:827px;top:749px;width:1px;height:16px;background:#cfcfcf"></div>
<div class="a " style="left:827.60px;top:752.55px;font:10.3px/12.36px 'Liberation Sans',sans-serif;color:#333;">Pesel</div>
<div class="a" style="left:903px;top:749px;width:1px;height:16px;background:#cfcfcf"></div>
<div class="a " style="left:903.70px;top:752.55px;font:10.3px/12.36px 'Liberation Sans',sans-serif;color:#333;">Regon</div>
<div class="a" style="left:997px;top:749px;width:1px;height:16px;background:#cfcfcf"></div>
<div class="a " style="left:998.50px;top:752.55px;font:10.3px/12.36px 'Liberation Sans',sans-serif;color:#333;">Rodzaj dok. toż.</div>
<div class="a" style="left:1111px;top:749px;width:1px;height:16px;background:#cfcfcf"></div>
<div class="a " style="left:1112.00px;top:752.55px;font:10.3px/12.36px 'Liberation Sans',sans-serif;color:#333;">Numer dok. toż.</div>
<div class="a" style="left:1198px;top:749px;width:1px;height:16px;background:#cfcfcf"></div>
<div class="a " style="left:1198.90px;top:752.55px;font:10.3px/12.36px 'Liberation Sans',sans-serif;color:#333;">Kod k…</div>
<div class="a" style="left:1239px;top:749px;width:1px;height:16px;background:#cfcfcf"></div>
<div class="a " style="left:1240.50px;top:752.55px;font:10.3px/12.36px 'Liberation Sans',sans-serif;color:#333;">Imię ojca</div>
<div class="a" style="left:1329px;top:749px;width:1px;height:16px;background:#cfcfcf"></div>
<div class="a " style="left:1330.00px;top:752.55px;font:10.3px/12.36px 'Liberation Sans',sans-serif;color:#333;">Imię matki</div>
<div class="a" style="left:111px;top:766px;width:14px;height:74px;background:#fff6ec"></div>
<div class="a" style="left:203px;top:766px;width:1214px;height:19px;background:#316ac5"></div>
<div class="a" style="left:204.0px;top:770.6px;width:142.5px;overflow:hidden;font:10.3px/12.4px 'Liberation Sans',sans-serif;color:#fff">Otomański</div>
<div class="a" style="left:348px;top:766px;width:1px;height:19px;background:#9db5e0"></div>
<div class="a" style="left:349.5px;top:770.6px;width:80.5px;overflow:hidden;font:10.3px/12.4px 'Liberation Sans',sans-serif;color:#fff">Tadeusz Stanisław</div>
<div class="a" style="left:432px;top:766px;width:1px;height:19px;background:#9db5e0"></div>
<div class="a" style="left:433.0px;top:770.6px;width:48.7px;overflow:hidden;font:10.3px/12.4px 'Liberation Sans',sans-serif;color:#fff">30-233</div>
<div class="a" style="left:484px;top:766px;width:1px;height:19px;background:#9db5e0"></div>
<div class="a" style="left:484.7px;top:770.6px;width:114.8px;overflow:hidden;font:10.3px/12.4px 'Liberation Sans',sans-serif;color:#fff">Kraków</div>
<div class="a" style="left:601px;top:766px;width:1px;height:19px;background:#9db5e0"></div>
<div class="a" style="left:602.5px;top:770.6px;width:138.6px;overflow:hidden;font:10.3px/12.4px 'Liberation Sans',sans-serif;color:#fff">ul. Mierzyńska 3</div>
<div class="a" style="left:743px;top:766px;width:1px;height:19px;background:#9db5e0"></div>
<div class="a" style="left:744.1px;top:770.6px;width:80.5px;overflow:hidden;font:10.3px/12.4px 'Liberation Sans',sans-serif;color:#fff"></div>
<div class="a" style="left:827px;top:766px;width:1px;height:19px;background:#9db5e0"></div>
<div class="a" style="left:827.6px;top:770.6px;width:73.1px;overflow:hidden;font:10.3px/12.4px 'Liberation Sans',sans-serif;color:#fff">02070373501</div>
<div class="a" style="left:903px;top:766px;width:1px;height:19px;background:#9db5e0"></div>
<div class="a" style="left:903.7px;top:770.6px;width:91.8px;overflow:hidden;font:10.3px/12.4px 'Liberation Sans',sans-serif;color:#fff"></div>
<div class="a" style="left:997px;top:766px;width:1px;height:19px;background:#9db5e0"></div>
<div class="a" style="left:998.5px;top:770.6px;width:110.5px;overflow:hidden;font:10.3px/12.4px 'Liberation Sans',sans-serif;color:#fff">DO. dowód osobisty</div>
<div class="a" style="left:1111px;top:766px;width:1px;height:19px;background:#9db5e0"></div>
<div class="a" style="left:1112.0px;top:770.6px;width:83.9px;overflow:hidden;font:10.3px/12.4px 'Liberation Sans',sans-serif;color:#fff">AYM306867</div>
<div class="a" style="left:1198px;top:766px;width:1px;height:19px;background:#9db5e0"></div>
<div class="a" style="left:1198.9px;top:770.6px;width:38.6px;overflow:hidden;font:10.3px/12.4px 'Liberation Sans',sans-serif;color:#fff">PL</div>
<div class="a" style="left:1239px;top:766px;width:1px;height:19px;background:#9db5e0"></div>
<div class="a" style="left:1240.5px;top:770.6px;width:86.5px;overflow:hidden;font:10.3px/12.4px 'Liberation Sans',sans-serif;color:#fff">Stanisław</div>
<div class="a" style="left:1329px;top:766px;width:1px;height:19px;background:#9db5e0"></div>
<div class="a" style="left:1330.0px;top:770.6px;width:85.8px;overflow:hidden;font:10.3px/12.4px 'Liberation Sans',sans-serif;color:#fff">Kornelia</div>
<div class="a" style="left:159px;top:766px;width:1px;height:19px;background:#e3e3e3"></div>
<div class="a" style="left:203px;top:766px;width:1px;height:19px;background:#e3e3e3"></div>
<div class="a" style="left:125px;top:785px;width:1292px;height:1px;background:#dfe3ea"></div>
<div class="a " style="left:144.18px;top:788.29px;font:9.2px/11.04px 'Liberation Sans',sans-serif;color:#1a1a1a;letter-spacing:-0.250px;">Nowa strona</div>
<div class="a" style="left:99px;top:802px;width:1318px;height:1px;background:#c9cfdc"></div>
<div class="a" style="left:111px;top:803px;width:14px;height:37px;background:#eef1fb"></div>
<div class="a" style="left:125px;top:803px;width:1292px;height:19px;background:#f0f2fb"></div>
<div class="a" style="left:125px;top:803px;width:78px;height:19px;background:#fff"></div>
<div class="a" style="left:204.0px;top:807.4px;width:142.5px;overflow:hidden;font:10.3px/12.4px 'Liberation Sans',sans-serif;color:#111">Filipczak</div>
<div class="a" style="left:348px;top:803px;width:1px;height:19px;background:#d7dce8"></div>
<div class="a" style="left:349.5px;top:807.4px;width:80.5px;overflow:hidden;font:10.3px/12.4px 'Liberation Sans',sans-serif;color:#111">Marta Wiktoria</div>
<div class="a" style="left:432px;top:803px;width:1px;height:19px;background:#d7dce8"></div>
<div class="a" style="left:433.0px;top:807.4px;width:48.7px;overflow:hidden;font:10.3px/12.4px 'Liberation Sans',sans-serif;color:#111">30-233</div>
<div class="a" style="left:484px;top:803px;width:1px;height:19px;background:#d7dce8"></div>
<div class="a" style="left:484.7px;top:807.4px;width:114.8px;overflow:hidden;font:10.3px/12.4px 'Liberation Sans',sans-serif;color:#111">Kraków</div>
<div class="a" style="left:601px;top:803px;width:1px;height:19px;background:#d7dce8"></div>
<div class="a" style="left:602.5px;top:807.4px;width:138.6px;overflow:hidden;font:10.3px/12.4px 'Liberation Sans',sans-serif;color:#111">ul. Cukrowa 3/5</div>
<div class="a" style="left:743px;top:803px;width:1px;height:19px;background:#d7dce8"></div>
<div class="a" style="left:744.1px;top:807.4px;width:80.5px;overflow:hidden;font:10.3px/12.4px 'Liberation Sans',sans-serif;color:#111"></div>
<div class="a" style="left:827px;top:803px;width:1px;height:19px;background:#d7dce8"></div>
<div class="a" style="left:827.6px;top:807.4px;width:73.1px;overflow:hidden;font:10.3px/12.4px 'Liberation Sans',sans-serif;color:#111">78050804929</div>
<div class="a" style="left:903px;top:803px;width:1px;height:19px;background:#d7dce8"></div>
<div class="a" style="left:903.7px;top:807.4px;width:91.8px;overflow:hidden;font:10.3px/12.4px 'Liberation Sans',sans-serif;color:#111"></div>
<div class="a" style="left:997px;top:803px;width:1px;height:19px;background:#d7dce8"></div>
<div class="a" style="left:998.5px;top:807.4px;width:110.5px;overflow:hidden;font:10.3px/12.4px 'Liberation Sans',sans-serif;color:#111">DO. dowód osobisty</div>
<div class="a" style="left:1111px;top:803px;width:1px;height:19px;background:#d7dce8"></div>
<div class="a" style="left:1112.0px;top:807.4px;width:83.9px;overflow:hidden;font:10.3px/12.4px 'Liberation Sans',sans-serif;color:#111">ALJ946225</div>
<div class="a" style="left:1198px;top:803px;width:1px;height:19px;background:#d7dce8"></div>
<div class="a" style="left:1198.9px;top:807.4px;width:38.6px;overflow:hidden;font:10.3px/12.4px 'Liberation Sans',sans-serif;color:#111">PL</div>
<div class="a" style="left:1239px;top:803px;width:1px;height:19px;background:#d7dce8"></div>
<div class="a" style="left:1240.5px;top:807.4px;width:86.5px;overflow:hidden;font:10.3px/12.4px 'Liberation Sans',sans-serif;color:#111">Krzysztof</div>
<div class="a" style="left:1329px;top:803px;width:1px;height:19px;background:#d7dce8"></div>
<div class="a" style="left:1330.0px;top:807.4px;width:85.8px;overflow:hidden;font:10.3px/12.4px 'Liberation Sans',sans-serif;color:#111">Anna</div>
<div class="a" style="left:159px;top:803px;width:1px;height:19px;background:#e3e3e3"></div>
<div class="a" style="left:203px;top:803px;width:1px;height:19px;background:#e3e3e3"></div>
<div class="a" style="left:125px;top:822px;width:1292px;height:1px;background:#dfe3ea"></div>
<div class="a " style="left:144.18px;top:825.29px;font:9.2px/11.04px 'Liberation Sans',sans-serif;color:#1a1a1a;letter-spacing:-0.250px;">Nowa strona</div>
<div class="a" style="left:99px;top:839px;width:1319px;height:1px;background:#c9cfdc"></div>
<svg class="a" style="left:135px;top:768.5px;" width="14" height="14" viewBox="0 0 14 14"><circle cx="7" cy="7" r="6.3" fill="#4cb04a" stroke="#2f8a2f" stroke-width="0.8"/><circle cx="7" cy="5.5" r="4.5" fill="#7fd07a" opacity=".6"/><path d="M3.8 7.2l2.2 2.2 4.3-4.4" fill="none" stroke="#fff" stroke-width="1.8"/></svg>
<svg class="a" style="left:162.5px;top:769.5px;" width="16" height="12" viewBox="0 0 16 12"><path d="M0.5 1.5h5l1.5 1.5h6v8.5h-12.5z" fill="#e8a24a" stroke="#b86e1e" stroke-width="0.7"/><path d="M2.5 5h13l-2.5 6.5h-12.5z" fill="#f8cd88" stroke="#c77a22" stroke-width="0.7"/></svg>
<svg class="a" style="left:182.5px;top:768.5px;" width="14" height="14" viewBox="0 0 14 14"><path d="M1 0.5h7l3 3v10h-10z" fill="#fff" stroke="#7d8fc6" stroke-width="0.8"/><circle cx="10" cy="10" r="3.6" fill="#e02020"/><rect x="8" y="9.3" width="4" height="1.4" fill="#fff"/></svg>
<svg class="a" style="left:135px;top:805.5px;" width="14" height="14" viewBox="0 0 14 14"><circle cx="7" cy="7" r="6.3" fill="#4cb04a" stroke="#2f8a2f" stroke-width="0.8"/><circle cx="7" cy="5.5" r="4.5" fill="#7fd07a" opacity=".6"/><path d="M3.8 7.2l2.2 2.2 4.3-4.4" fill="none" stroke="#fff" stroke-width="1.8"/></svg>
<svg class="a" style="left:162.5px;top:806.5px;" width="16" height="12" viewBox="0 0 16 12"><path d="M0.5 1.5h5l1.5 1.5h6v8.5h-12.5z" fill="#e8a24a" stroke="#b86e1e" stroke-width="0.7"/><path d="M2.5 5h13l-2.5 6.5h-12.5z" fill="#f8cd88" stroke="#c77a22" stroke-width="0.7"/></svg>
<svg class="a" style="left:182.5px;top:805.5px;" width="14" height="14" viewBox="0 0 14 14"><path d="M1 0.5h7l3 3v10h-10z" fill="#fff" stroke="#7d8fc6" stroke-width="0.8"/><circle cx="10" cy="10" r="3.6" fill="#e02020"/><rect x="8" y="9.3" width="4" height="1.4" fill="#fff"/></svg>
<div class="a" style="left:0px;top:1002px;width:1536px;height:22px;background:#f3f2f1"></div>
<div class="a" style="left:0px;top:1002px;width:1536px;height:1px;background:#d6d6d6"></div>
<div class="a " style="left:4.32px;top:1006.89px;font:11px/13.20px 'Liberation Sans',sans-serif;color:#404040;letter-spacing:-0.140px;">Strona 1 z 5</div>
<div class="a " style="left:80.11px;top:1006.89px;font:11px/13.20px 'Liberation Sans',sans-serif;color:#505050;letter-spacing:-0.278px;">Wyrazy: 2112</div>
<svg class="a" style="left:160px;top:1006px;" width="16" height="13" viewBox="0 0 16 13"><path d="M1.5 1.5h5.5v10h-5.5zM7 1.5h5v3" fill="none" stroke="#444" stroke-width="1"/><path d="M8 11.5l1-3 5.5-5.5 1.5 1.5-5.5 5.5z" fill="none" stroke="#444" stroke-width="1"/></svg>
<svg class="a" style="left:193px;top:1006px;" width="16" height="14" viewBox="0 0 16 14"><rect x="1.5" y="1.5" width="12.5" height="11" fill="none" stroke="#444" stroke-width="1"/><path d="M1.5 4h12.5" stroke="#444"/><circle cx="9.5" cy="9" r="2.6" fill="none" stroke="#444"/><circle cx="9.5" cy="9" r="1.1" fill="#444"/><path d="M3 6.5h2M3 8.5h2M3 10.5h2" stroke="#444" stroke-width=".8"/></svg>
<svg class="a" style="left:1347px;top:1005px;" width="16" height="15" viewBox="0 0 16 15"><path d="M1 4V1h3M12 1h3v3M15 11v3h-3M4 14H1v-3" fill="none" stroke="#444" stroke-width="1"/><path d="M4.5 3.5h4.5l2.5 2.5v5.5h-7z M9 3.5v2.5h2.5" fill="none" stroke="#444" stroke-width="1"/></svg>
<div class="a " style="left:1364.37px;top:1006.89px;font:11px/13.20px 'Liberation Sans',sans-serif;color:#404040;letter-spacing:0.001px;">Koncentracja uwagi</div>
<svg class="a" style="left:1482px;top:1005px;" width="15" height="15" viewBox="0 0 15 15"><path d="M1 1.5h6l0.5 1 0.5-1h6v11h-6l-0.5 1-0.5-1h-6z" fill="none" stroke="#333" stroke-width="1.1"/><path d="M7.5 2.5v10" stroke="#333" stroke-width="1"/><path d="M2.5 4.5h3M2.5 7h3M2.5 9.5h3M9.5 4.5h3M9.5 7h3M9.5 9.5h3" stroke="#555" stroke-width="1"/></svg>
<div class="a" style="left:1509px;top:1003px;width:27px;height:21px;background:#c8c8c8"></div>
<svg class="a" style="left:1521px;top:1005px;" width="12" height="17" viewBox="0 0 12 17"><rect x="1" y="1" width="10" height="14.5" fill="#f4f4f4" stroke="#262626" stroke-width="1.2"/><path d="M3 4.5h6M3 7h6M3 9.5h6M3 12h6" stroke="#555" stroke-width="1"/></svg>
</body></html>
